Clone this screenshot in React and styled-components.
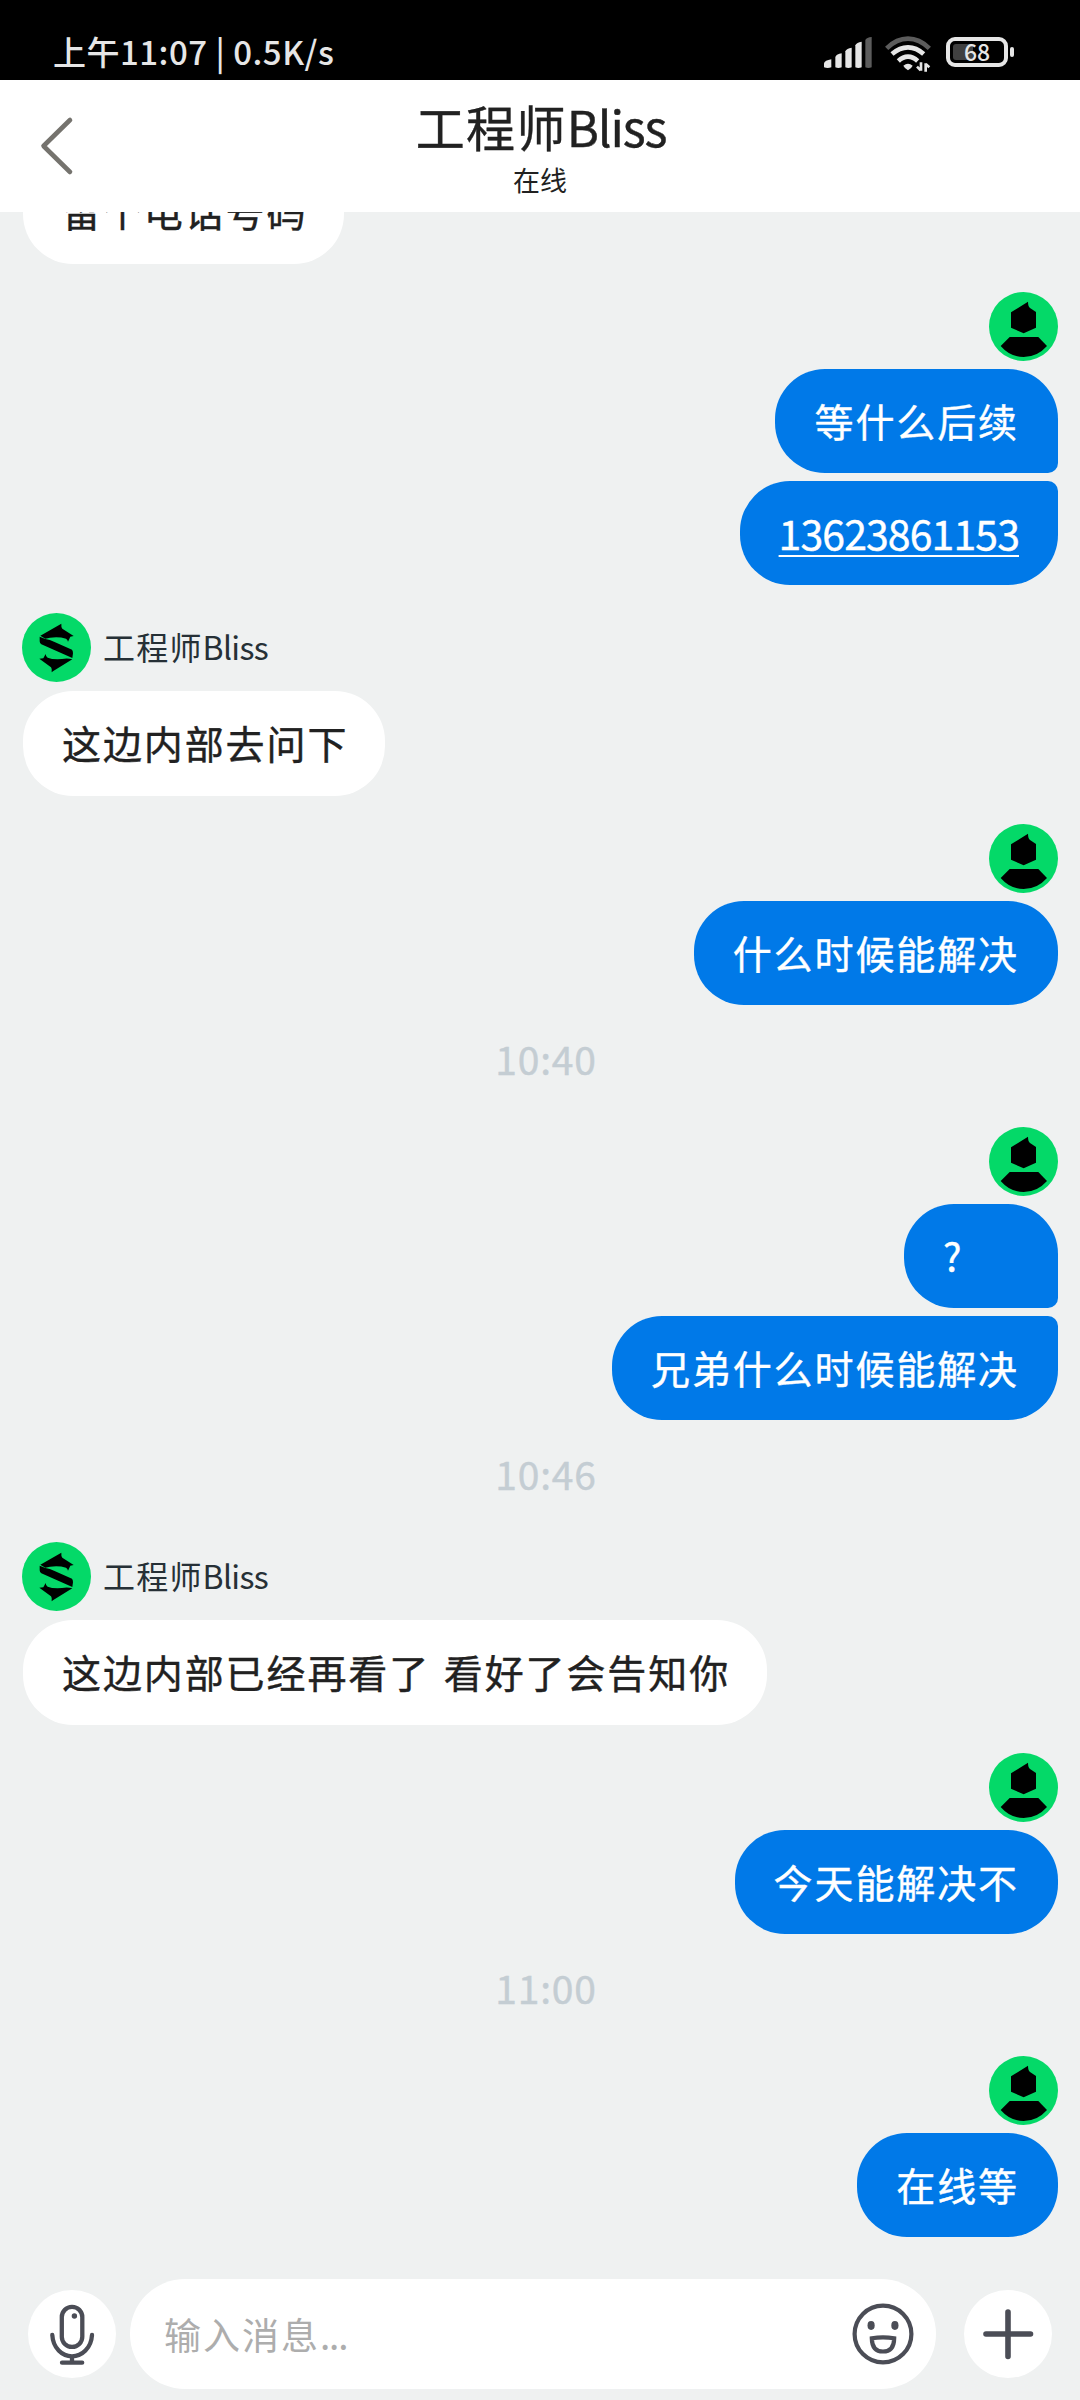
import React from 'react';
import styled, {createGlobalStyle, ThemeProvider} from 'styled-components';

const theme = {
  colors: {
    page: '#eff1f1',
    surface: '#ffffff',
    text: '#212121',
    name: '#263036',
    time: '#c4cdd3',
    hint: '#adadad',
    icon: '#4b4d56',
    back: '#75736e',
    sent: '#0079e8',
    avatar: '#04d968',
    status: '#e6e6e6',
    statusDim: '#5c5c5c',
  },
};

const GlobalStyle = createGlobalStyle`
  * {
    box-sizing: border-box;
  }
  body {
    margin: 0;
    font-family: 'Noto Sans CJK SC', 'Noto Sans', sans-serif;
  }
  svg {
    display: block;
  }
`;

const Screen = styled.div`
  background: ${(props) => props.theme.colors.page};
  color: ${(props) => props.theme.colors.text};
  display: flex;
  flex-direction: column;
  height: 2400px;
  overflow: hidden;
  width: 1080px;
`;

const StatusBar = styled.div`
  align-items: center;
  background: #000;
  color: ${(props) => props.theme.colors.status};
  display: flex;
  flex: none;
  height: 80px;
  justify-content: space-between;
  padding: 25px 66px 0 53px;
`;

const StatusText = styled.div`
  font-size: 33px;
  font-weight: 500;
  letter-spacing: 0.5px;
  line-height: 40px;
  margin-top: -3px;
  white-space: pre;
`;

const StatusIcons = styled.div`
  align-items: center;
  display: flex;
  margin-top: -1px;
`;

const SignalIcon = styled.svg`
  height: 31px;
  margin-right: 13px;
  width: 48px;
`;

const WifiIcon = styled.svg`
  height: 36px;
  margin: 3px 15px 0 0;
  width: 46px;
`;

const Battery = styled.div`
  align-items: center;
  border: 4px solid ${(props) => props.theme.colors.status};
  border-radius: 9px;
  display: flex;
  height: 30px;
  justify-content: center;
  position: relative;
  width: 62px;
`;

const BatteryLevel = styled.div`
  background: #404040;
  border-radius: 3px;
  height: 16px;
  left: 3px;
  position: absolute;
  top: 3px;
  width: 20px;
`;

const BatteryLabel = styled.span`
  font-size: 23px;
  font-weight: 500;
  line-height: 20px;
  margin-top: -2px;
  position: relative;
`;

const BatteryTip = styled.div`
  background: ${(props) => props.theme.colors.status};
  border-radius: 2px;
  height: 10px;
  margin-left: 2px;
  width: 4px;
`;

const Header = styled.header`
  align-items: center;
  background: ${(props) => props.theme.colors.surface};
  display: grid;
  flex: none;
  grid-template-columns: 100px 1fr 100px;
  height: 132px;
`;

const BackButton = styled.button`
  background: none;
  border: 0;
  height: 60px;
  padding: 0 0 0 39px;
`;

const HeaderTitles = styled.div`
  align-items: center;
  display: flex;
  flex-direction: column;
`;

const Title = styled.h1`
  -webkit-text-stroke: 0.4px;
  font-size: 49px;
  font-weight: 400;
  letter-spacing: 1.3px;
  line-height: 60px;
  margin: 0 0 0 2px;
`;

const Latin = styled.span`
  letter-spacing: -1.2px;
`;

const Subtitle = styled.div`
  font-size: 27px;
  line-height: 36px;
  margin: 6px 0 -2px;
`;

const Conversation = styled.main`
  display: flex;
  flex: 1;
  flex-direction: column;
  overflow: hidden;
  padding: 0 22px;
`;

const Group = styled.section`
  align-items: ${(props) => (props.$sent ? 'flex-end' : 'flex-start')};
  display: flex;
  flex: none;
  flex-direction: column;
  margin-bottom: ${(props) => (props.$last ? 0 : 28)}px;

  &:first-child {
    margin-top: -53px;
  }
`;

const Sender = styled.div`
  align-items: center;
  display: flex;
  height: 69px;
  margin-bottom: ${(props) => (props.$sent ? 8 : 9)}px;
`;

const SenderName = styled.span`
  color: ${(props) => props.theme.colors.name};
  font-size: 32px;
  letter-spacing: 1.2px;
  line-height: 40px;
  margin: -3px 0 0 12px;
`;

const SenderLatin = styled.span`
  letter-spacing: -0.7px;
`;

const sentRadius = {
  single: '50px',
  first: '50px 50px 10px 50px',
  last: '50px 10px 50px 50px',
};

const Bubble = styled.div`
  -webkit-text-stroke: 0.4px;
  background: ${(props) => (props.$sent ? props.theme.colors.sent : props.theme.colors.surface)};
  border-radius: ${(props) => sentRadius[props.$position || 'single']};
  color: ${(props) => (props.$sent ? '#fff' : props.theme.colors.text)};
  font-size: 39px;
  height: ${(props) => (props.$sent ? 104 : 105)}px;
  letter-spacing: 1.9px;
  line-height: 103px;
  margin-left: ${(props) => (props.$sent ? 0 : 1)}px;
  min-width: 154px;
  padding: 0 ${(props) => (props.$sent ? 39 : 37)}px 0 39px;
  white-space: nowrap;
  word-spacing: 3px;

  & + & {
    margin-top: 8px;
  }
`;

const PhoneLink = styled.a`
  color: inherit;
  font-size: 41px;
  letter-spacing: -0.9px;
  text-decoration: underline;
  text-decoration-thickness: 2px;
  text-underline-offset: 5px;
`;

const Timestamp = styled.time`
  -webkit-text-stroke: 0.4px;
  color: ${(props) => props.theme.colors.time};
  flex: none;
  font-size: 39px;
  height: 94px;
  letter-spacing: 0.8px;
  line-height: 50px;
  padding-left: 12px;
  text-align: center;
`;

const Composer = styled.footer`
  align-items: center;
  display: flex;
  flex: none;
  height: 132px;
  padding: 0 28px;
`;

const RoundButton = styled.button`
  background: ${(props) => props.theme.colors.surface};
  border: 0;
  border-radius: 50%;
  flex: none;
  height: 88px;
  padding: 0;
  width: 88px;
`;

const InputBox = styled.div`
  align-items: center;
  background: ${(props) => props.theme.colors.surface};
  border-radius: 55px;
  display: flex;
  flex: 1;
  height: 110px;
  justify-content: space-between;
  margin: 0 28px 0 14px;
  padding: 0 22px 0 34px;
`;

const Placeholder = styled.span`
  color: ${(props) => props.theme.colors.hint};
  font-size: 37px;
  letter-spacing: 2px;
  line-height: 50px;
`;

const StrokeIcon = styled.svg`
  fill: none;
  stroke: ${(props) => props.$color || props.theme.colors.icon};
  stroke-linecap: round;
  stroke-linejoin: round;
`;

const AvatarIcon = styled.svg`
  height: 69px;
  width: 69px;
`;

const AgentAvatar = () => (
  <AvatarIcon viewBox="0 0 207 207">
    <circle cx="103.5" cy="103.5" r="103.5" fill={theme.colors.avatar} />
    <path d="M55 68 118 32Q117 42 121 47L155 69 145 71 138 86Q137 80 132 77 110 70 84 74L70 77Z" />
    <path d="M53 71 70 78Q84 80 96 86L150 110Q153 114 153 121L151 135 58 94Q53 91 53 85Z" />
    <path d="M151 139 94 174 89 178Q91 168 87 163L52 137 64 136 71 123Q71 131 77 134 92 140 120 138 137 135 151 139Z" />
  </AvatarIcon>
);

const UserAvatar = () => (
  <AvatarIcon viewBox="0 0 207 207">
    <circle cx="103.5" cy="103.5" r="103.5" fill={theme.colors.avatar} />
    <path d="M66 61 117 29Q117 43 123 48L141 60V107L104 124 66 107Z" />
    <path d="M62 135H148L174 162Q145 195 104 195T35 162Z" />
  </AvatarIcon>
);

const bubblePosition = (index, count) => {
  if (count === 1) {
    return 'single';
  }
  return index === 0 ? 'first' : 'last';
};

const MessageGroup = ({sent, hideSender, last, messages}) => (
  <Group $sent={sent} $last={last}>
    {!hideSender && (
      <Sender $sent={sent}>
        {sent ? <UserAvatar /> : <AgentAvatar />}
        {!sent && (
          <SenderName>
            工程师<SenderLatin>Bliss</SenderLatin>
          </SenderName>
        )}
      </Sender>
    )}
    {messages.map((message, i) => (
      <Bubble key={i} $sent={sent} $position={bubblePosition(i, messages.length)}>
        {/^\d{11}$/.test(message) ? <PhoneLink>{message}</PhoneLink> : message}
      </Bubble>
    ))}
  </Group>
);

const items = [
  {messages: ['留个电话号码'], hideSender: true},
  {sent: true, messages: ['等什么后续', '13623861153']},
  {messages: ['这边内部去问下']},
  {sent: true, messages: ['什么时候能解决']},
  {time: '10:40'},
  {sent: true, messages: ['?', '兄弟什么时候能解决']},
  {time: '10:46'},
  {messages: ['这边内部已经再看了 看好了会告知你']},
  {sent: true, messages: ['今天能解决不']},
  {time: '11:00'},
  {sent: true, messages: ['在线等'], last: true},
];

const App = () => (
  <ThemeProvider theme={theme}>
    <GlobalStyle />
    <Screen>
      <StatusBar>
        <StatusText>上午11:07 | 0.5K/s</StatusText>
        <StatusIcons>
          <SignalIcon viewBox="0 0 144 93" fill={theme.colors.status}>
            <path d="M0 91V79Q2 70 22 67V91Q11 95 0 91Z" />
            <path d="M34 91V60Q38 51 53 49V91Q43 95 34 91Z" />
            <path d="M64 91V43Q68 34 83 32V91Q73 95 64 91Z" />
            <path d="M94 91V25Q98 16 113 14V91Q103 95 94 91Z" />
            <path fill={theme.colors.statusDim} d="M124 91V9Q128 1 143 0V91Q133 95 124 91Z" />
          </SignalIcon>
          <WifiIcon viewBox="0 0 138 108" fill="none" stroke={theme.colors.status} strokeWidth="14">
            <path stroke={theme.colors.statusDim} d="M5 37Q35 8 69 8T133 37" />
            <path d="M21 54Q44 34 69 34T116 54" />
            <path d="M40 75Q54 62 69 62T98 75" />
            <path stroke="none" fill={theme.colors.status} d="M55 89Q69 77 83 89 80 96 69 103 58 96 55 89Z" />
            <path strokeWidth="8" d="M108 79V104M96 92 107 103M122 107V82M122 84 133 94" />
          </WifiIcon>
          <Battery>
            <BatteryLevel />
            <BatteryLabel>68</BatteryLabel>
          </Battery>
          <BatteryTip />
        </StatusIcons>
      </StatusBar>

      <Header>
        <BackButton aria-label="返回">
          <StrokeIcon width="36" height="60" viewBox="0 0 36 60" strokeWidth="4.6" $color={theme.colors.back}>
            <path d="M31 4 4.5 30 31 56" />
          </StrokeIcon>
        </BackButton>
        <HeaderTitles>
          <Title>
            工程师<Latin>Bliss</Latin>
          </Title>
          <Subtitle>在线</Subtitle>
        </HeaderTitles>
      </Header>

      <Conversation>
        {items.map((item, i) =>
          item.time ? <Timestamp key={i}>{item.time}</Timestamp> : <MessageGroup key={i} {...item} />
        )}
      </Conversation>

      <Composer>
        <RoundButton aria-label="语音">
          <StrokeIcon width="88" height="88" viewBox="0 0 88 88" strokeWidth="4.3">
            <rect x="33.8" y="16.9" width="20.5" height="40" rx="10.2" />
            <path d="M24.3 45C25 58 34 66.3 44 66.3S63.3 58 64 45M44 66.5V72.7M34 72.7H54.2" />
            <circle cx="46.4" cy="26" r="2.7" fill={theme.colors.icon} stroke="none" />
          </StrokeIcon>
        </RoundButton>
        <InputBox>
          <Placeholder>
            输入消息<Latin>...</Latin>
          </Placeholder>
          <StrokeIcon width="62" height="62" viewBox="0 0 62 62" strokeWidth="4.2">
            <circle cx="31" cy="31" r="28.4" />
            <path strokeLinejoin="miter" d="M19.8 35.2Q31 33.4 42.2 35.2 42 48.5 31 48.5T19.8 35.2Z" />
            <g fill={theme.colors.icon} stroke="none">
              <ellipse cx="19.1" cy="22.5" rx="3.6" ry="4.4" />
              <ellipse cx="42.9" cy="22.5" rx="3.6" ry="4.4" />
            </g>
          </StrokeIcon>
        </InputBox>
        <RoundButton aria-label="更多">
          <StrokeIcon width="88" height="88" viewBox="0 0 88 88" strokeWidth="5.6">
            <path d="M22 44H66.5M44 22V66.5" />
          </StrokeIcon>
        </RoundButton>
      </Composer>
    </Screen>
  </ThemeProvider>
);

export default App;
